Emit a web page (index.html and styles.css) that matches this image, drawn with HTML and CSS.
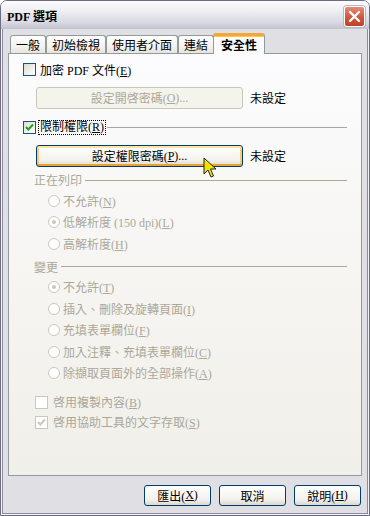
FILE: index.html
```html
<!DOCTYPE html>
<html lang="zh-Hant">
<head>
    <meta charset="UTF-8">
    <meta name="viewport" content="width=device-width, initial-scale=1.0">
    <title>PDF 選項</title>
    <link rel="stylesheet" href="styles.css">
</head>
<body>
    <div class="window">
        <div class="titlebar">
            <span class="title">PDF 選項</span>
            <span class="close">
                <svg width="13" height="13" viewBox="0 0 13 13"><path d="M2 2 L11 11 M11 2 L2 11" stroke="#fff" stroke-width="2.4" stroke-linecap="round"/></svg>
            </span>
        </div>
        <div class="client">
            <div class="tabs">
                <div class="tab">一般</div>
                <div class="tab">初始檢視</div>
                <div class="tab">使用者介面</div>
                <div class="tab">連結</div>
                <div class="tab active">安全性</div>
            </div>
            <div class="panel">
                <div class="row first">
                    <span class="box"></span>
                    <span class="text">加密 PDF 文件(<u>E</u>)</span>
                </div>
                <div class="btnrow">
                    <span class="btn wide disabled">設定開啓密碼(<u>O</u>)...</span>
                    <span class="status">未設定</span>
                </div>
                <div class="row head-check">
                    <span class="box">
                        <svg width="11" height="11" viewBox="0 0 11 11"><path d="M2 5 L4.3 7.5 L9 2.5" fill="none" stroke="#21a121" stroke-width="2"/></svg>
                    </span>
                    <span class="text focus">限制權限(<u>R</u>)</span>
                    <span class="rule"></span>
                </div>
                <div class="btnrow second">
                    <span class="btn wide hover">設定權限密碼(<u>P</u>)...</span>
                    <span class="status">未設定</span>
                </div>

                <div class="group-label print">
                    <span>正在列印</span>
                    <span class="rule"></span>
                </div>
                <div class="option"><span class="radio"></span><span>不允許(<u>N</u>)</span></div>
                <div class="option"><span class="radio on"></span><span>低解析度 (150 dpi)(<u>L</u>)</span></div>
                <div class="option"><span class="radio"></span><span>高解析度(<u>H</u>)</span></div>

                <div class="group-label change">
                    <span>變更</span>
                    <span class="rule"></span>
                </div>
                <div class="option"><span class="radio on"></span><span>不允許(<u>T</u>)</span></div>
                <div class="option"><span class="radio"></span><span>插入、刪除及旋轉頁面(<u>I</u>)</span></div>
                <div class="option"><span class="radio"></span><span>充填表單欄位(<u>F</u>)</span></div>
                <div class="option"><span class="radio"></span><span>加入注釋、充填表單欄位(<u>C</u>)</span></div>
                <div class="option"><span class="radio"></span><span>除擷取頁面外的全部操作(<u>A</u>)</span></div>

                <div class="option check first-check"><span class="box off"></span><span>啓用複製內容(<u>B</u>)</span></div>
                <div class="option check">
                    <span class="box off">
                        <svg width="11" height="11" viewBox="0 0 11 11"><path d="M2 5 L4.3 7.5 L9 2.5" fill="none" stroke="#cac8bb" stroke-width="2"/></svg>
                    </span>
                    <span>啓用協助工具的文字存取(<u>S</u>)</span>
                </div>

                <svg class="cursor" width="14" height="22" viewBox="0 0 14 22">
                    <path d="M1 1 L1 17 L5 13 L8 20 L10.5 19 L7.5 12 L13 12 Z" fill="#f2e400" stroke="#222" stroke-width="1" stroke-linejoin="round"/>
                </svg>
            </div>
            <div class="footer">
                <span class="btn">匯出(<u>X</u>)</span>
                <span class="btn">取消</span>
                <span class="btn">說明(<u>H</u>)</span>
            </div>
        </div>
    </div>
</body>
</html>
```

FILE: styles.css
```css
body {
    margin: 0;
    font-family: "Liberation Serif", "Noto Sans CJK TC", serif;
    font-size: 12px;
    color: #000;
    background: #fff;
}
.window {
    width: 370px;
    height: 516px;
    box-sizing: border-box;
    border: 1px solid #6e6d80;
    border-radius: 7px 7px 0 0;
    background: #f4f4f7;
    display: flex;
    flex-direction: column;
    overflow: hidden;
}
.titlebar {
    height: 28px;
    flex: none;
    display: flex;
    align-items: center;
    justify-content: space-between;
    padding: 0 4px 0 6px;
    background: linear-gradient(#fdfdfe, #eeeef3 35%, #dadae2 75%, #c2c2cf);
}
.title {
    font-weight: bold;
    font-size: 12px;
    margin-top: 1px;
}
.close {
    width: 19px;
    height: 19px;
    border: 1px solid #fff;
    border-radius: 3px;
    background: linear-gradient(#e48c78, #d0573d 55%, #bf3f27);
    box-shadow: 0 0 0 1px #b9b7c6;
    display: flex;
    align-items: center;
    justify-content: center;
    margin-top: 2px;
}
.client {
    flex: 1;
    margin: 0 1px 1px;
    border: 1px solid #8c8ba0;
    border-top: none;
    background: #e0dfe3;
    padding: 4px 5px 0;
}
.tabs {
    display: flex;
    align-items: flex-end;
    padding-left: 2px;
    height: 21px;
    margin-bottom: -1px;
    position: relative;
    z-index: 1;
}
.tab {
    height: 18px;
    box-sizing: border-box;
    padding: 0 5px;
    border: 1px solid #919b9c;
    border-bottom: none;
    border-radius: 3px 3px 0 0;
    background: linear-gradient(#fefefe, #f4f3ef 60%, #e6e4dc);
    display: flex;
    align-items: center;
    margin-bottom: 1px;
}
.tab.active {
    height: 21px;
    padding: 0 7px;
    margin: 0 0 0 -1px;
    font-weight: bold;
    background: #fcfcfe;
    border-top: 3px solid #f3a63a;
    box-shadow: inset 0 1px #ffc83c;
}
.panel {
    position: relative;
    height: 423px;
    box-sizing: border-box;
    border: 1px solid #919b9c;
    background: linear-gradient(#fcfcfe, #f5f4f0 60%, #f0efe9);
    padding: 4px 14px 0 14px;
}
.row {
    display: flex;
    align-items: center;
    height: 23px;
}
.box {
    width: 13px;
    height: 13px;
    box-sizing: border-box;
    border: 1px solid #1c5180;
    background: linear-gradient(135deg, #dcdcd7, #fff);
    display: flex;
    align-items: center;
    justify-content: center;
    flex: none;
}
.box.off {
    border-color: #cac8bb;
    background: #fff;
}
.row .text {
    margin-left: 3px;
    padding: 0 1px;
}
.focus {
    outline: 1px dotted #000;
    line-height: 13px;
}
.rule {
    flex: 1;
    border-top: 1px solid #a7a6aa;
    margin-left: 2px;
}
.head-check {
    margin-top: 7px;
}
.btnrow {
    display: flex;
    align-items: center;
    margin: 6px 0 0 13px;
    height: 22px;
}
.btn {
    height: 21px;
    box-sizing: border-box;
    border: 1px solid #003c74;
    border-radius: 3px;
    background: linear-gradient(#fff, #f3f2ed 70%, #dcd8cc);
    display: flex;
    align-items: center;
    justify-content: center;
    width: 67px;
}
.btn.wide {
    width: 207px;
    height: 22px;
}
.btn.disabled {
    border-color: #c9c7ba;
    background: #f4f3ec;
    color: #aca899;
}
.btn.hover {
    box-shadow: inset 0 2px #ffe6a0, inset 0 -2px #eaa230, inset 2px 0 #fbcb70, inset -2px 0 #fbcb70;
}
.status {
    margin-left: 7px;
}
.group-label {
    display: flex;
    align-items: center;
    height: 20px;
    color: #aca899;
    margin-left: 11px;
}
.group-label .rule {
    border-top-color: #aca899;
    margin-left: 3px;
}
.print {
    margin-top: 3px;
}
.change {
    margin-top: 2px;
}
.option {
    display: flex;
    align-items: center;
    height: 21.5px;
    margin-left: 25px;
    color: #aca899;
    gap: 3px;
}
.radio {
    width: 12px;
    height: 12px;
    box-sizing: border-box;
    border: 1px solid #cac8bb;
    border-radius: 50%;
    background: #fff;
    display: flex;
    align-items: center;
    justify-content: center;
    flex: none;
}
.radio.on::after {
    content: "";
    width: 4px;
    height: 4px;
    border-radius: 50%;
    background: #cac8bb;
}
.option.check {
    margin-left: 12px;
    height: 20px;
    gap: 5px;
}
.first-check {
    margin-top: 8px;
}
.cursor {
    position: absolute;
    left: 194px;
    top: 103px;
}
.footer {
    display: flex;
    justify-content: flex-end;
    gap: 8px;
    margin-top: 9px;
    padding-right: 1px;
}
```
